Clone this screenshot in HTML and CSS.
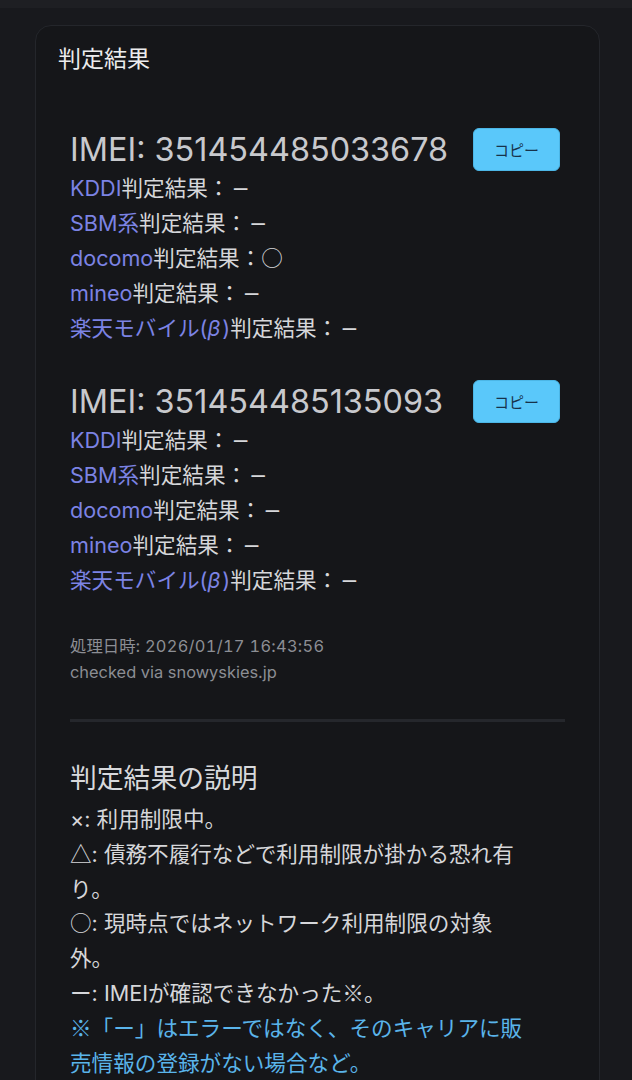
FILE: index.html
```html
<!DOCTYPE html>
<html lang="ja">
<head>
  <meta charset="UTF-8" />
  <meta name="viewport" content="width=device-width, initial-scale=1.0"/>
  <title>判定結果</title>
  <link rel="stylesheet" href="styles.css">
</head>
<body>
  <div class="topbar"></div>

  <main class="card">
    <h2 class="card-title">判定結果</h2>

    <div class="result-body">
      <!-- 1台目 -->
      <section class="imei-block">
        <div class="imei-row">
          <span class="imei">IMEI: 351454485033678</span>
          <button class="copy-btn">コピー</button>
        </div>
        <ul class="carrier-list">
          <li><span class="carrier">KDDI</span>判定結果：<span class="dash">−</span></li>
          <li><span class="carrier">SBM系</span>判定結果：<span class="dash">−</span></li>
          <li><span class="carrier">docomo</span>判定結果：<span class="mark">○</span></li>
          <li><span class="carrier">mineo</span>判定結果：<span class="dash">−</span></li>
          <li><span class="carrier">楽天モバイル(<i>β</i>)</span>判定結果：<span class="dash">−</span></li>
        </ul>
      </section>

      <!-- 2台目 -->
      <section class="imei-block">
        <div class="imei-row">
          <span class="imei">IMEI: 351454485135093</span>
          <button class="copy-btn">コピー</button>
        </div>
        <ul class="carrier-list">
          <li><span class="carrier">KDDI</span>判定結果：<span class="dash">−</span></li>
          <li><span class="carrier">SBM系</span>判定結果：<span class="dash">−</span></li>
          <li><span class="carrier">docomo</span>判定結果：<span class="dash">−</span></li>
          <li><span class="carrier">mineo</span>判定結果：<span class="dash">−</span></li>
          <li><span class="carrier">楽天モバイル(<i>β</i>)</span>判定結果：<span class="dash">−</span></li>
        </ul>
      </section>

      <div class="meta">
        <p>処理日時: <span class="num">2026/01/17 16:43:56</span></p>
        <p>checked via snowyskies.jp</p>
      </div>

      <hr class="divider">

      <section class="legend">
        <h3 class="legend-title">判定結果の説明</h3>
        <p>×: 利用制限中。</p>
        <p><span class="mark">△</span>: 債務不履行などで利用制限が掛かる恐れ有り。</p>
        <p><span class="mark">○</span>: 現時点ではネットワーク利用制限の対象外。</p>
        <p><span class="mark">ー</span>: IMEIが確認できなかった<span class="mark">※</span>。</p>
        <p class="note"><span class="mark">※</span>「ー」はエラーではなく、そのキャリアに販売情報の登録がない場合など。</p>
      </section>
    </div>
  </main>
</body>
</html>
```

FILE: styles.css
```css
body {
  margin: 0;
  background: #18191d;
  color: #d6d7da;
  font-family: Inter, "Noto Sans CJK JP", sans-serif;
}

.topbar {
  height: 8px;
  background: #1e1f23;
}

.card {
  margin: 17px 32px 0 35px;
  padding: 16px 22px 0 22px;
  background: #151619;
  border: 1px solid #24262b;
  border-radius: 16px;
  min-height: 1100px;
}

.card-title {
  margin: 0;
  font-size: 23px;
  font-weight: 400;
  line-height: 34px;
  color: #ececee;
}

.result-body {
  padding: 52px 12px 0 12px;
}

.imei-block + .imei-block {
  margin-top: 34px;
}

.imei-row {
  display: flex;
  align-items: center;
  height: 43px;
}

.imei {
  font-size: 32.4px;
  color: #c8c9cd;
  white-space: nowrap;
}

.copy-btn {
  width: 87px;
  height: 43px;
  margin: 0 5px 0 auto;
  font-family: "Noto Sans CJK JP", sans-serif;
  font-size: 15px;
  color: #17324a;
  background: #5ac8fa;
  border: 1px solid #4cb6e6;
  border-radius: 6px;
  cursor: pointer;
}

.carrier-list {
  list-style: none;
  margin: 0;
  padding: 0;
  font-size: 21.6px;
  line-height: 35px;
}

.carrier {
  color: #7c83e4;
}

.carrier i {
  padding-right: 2px;
}

/* 記号は全角のCJK字形で */
.mark {
  font-family: "Noto Sans CJK JP", sans-serif;
  line-height: 1;
}

.dash {
  font-family: "DejaVu Sans", sans-serif;
  line-height: 1;
  padding-left: 2px;
}

.meta {
  margin-top: 35px;
  font-size: 16.4px;
  line-height: 26px;
  color: #8c8e94;
}

.meta p {
  margin: 0;
}

.meta .num {
  font-variant-numeric: tabular-nums;
  letter-spacing: 0.3px;
}

.divider {
  margin: 34px 0 0;
  height: 3px;
  border: none;
  background: #25272c;
}

.legend {
  max-width: 460px;
  margin-top: 32px;
  font-size: 21.6px;
  line-height: 34.8px;
}

.legend-title {
  margin: 0;
  font-size: 26.8px;
  font-weight: 400;
  line-height: 48px;
  color: #d8d9dc;
}

.legend p {
  margin: 0;
}

.legend .note {
  color: #5ab4ea;
}
```
